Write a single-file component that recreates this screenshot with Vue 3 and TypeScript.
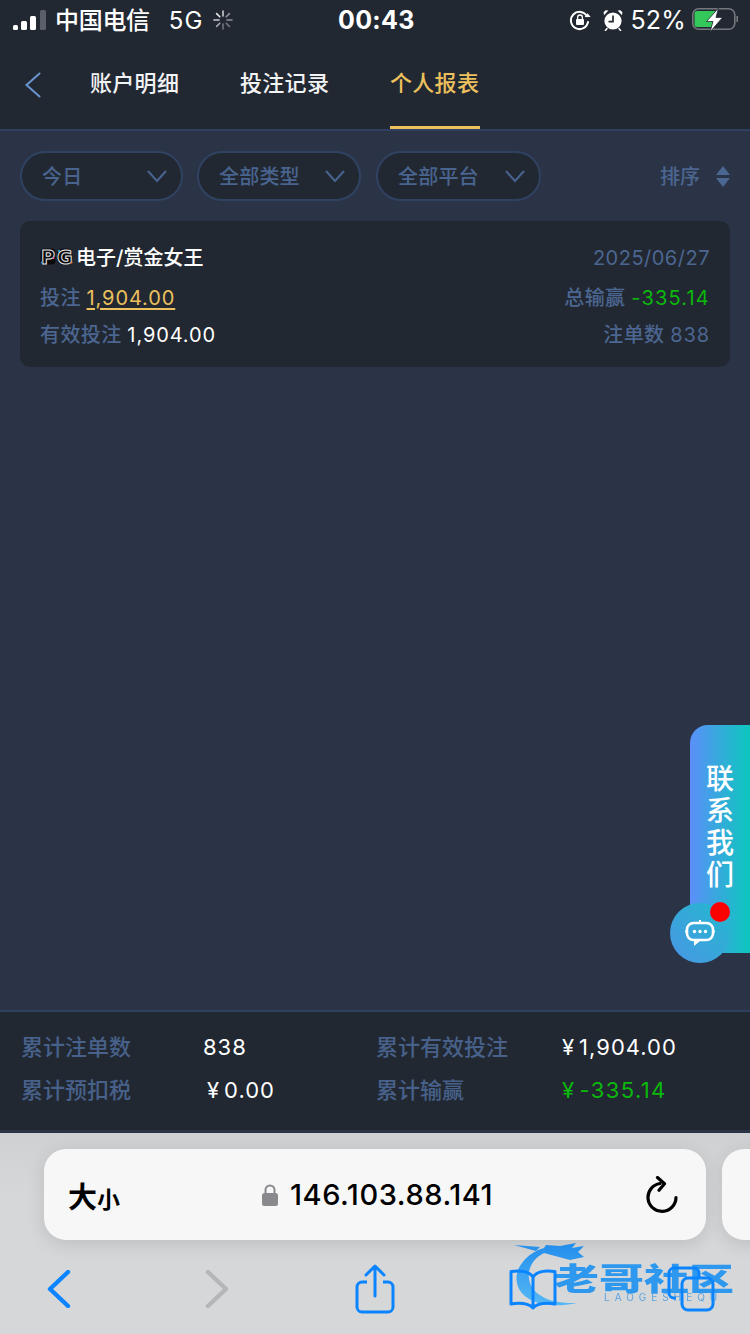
<template>
  <div class="page">
    <header class="top">
      <div class="status">
        <svg class="signal" width="33" height="20" viewBox="0 0 33 20">
          <rect x="0" y="15" width="5" height="5" rx="1.5" fill="#fff" />
          <rect x="8" y="11" width="6" height="9" rx="1.5" fill="#fff" />
          <rect x="17" y="6" width="6" height="14" rx="1.5" fill="#fff" />
          <rect x="27" y="0" width="6" height="20" rx="1.5" fill="#5b6068" />
        </svg>
        <span class="carrier">中国电信</span>
        <span class="net">5G</span>
        <svg class="spinner" width="20" height="20" viewBox="0 0 20 20" stroke-width="1.6" stroke-linecap="round">
          <path d="M10 1v5" stroke="#c9ccd0" />
          <path d="M16.4 3.6l-3.2 3.2" stroke="#8d9197" />
          <path d="M19 10h-5" stroke="#8d9197" />
          <path d="M16.4 16.4l-3.2-3.2" stroke="#70747b" />
          <path d="M10 19v-5" stroke="#70747b" />
          <path d="M3.6 16.4l3.2-3.2" stroke="#a5a8ad" />
          <path d="M1 10h5" stroke="#c9ccd0" />
          <path d="M3.6 3.6l3.2 3.2" stroke="#e6e7e9" />
        </svg>
        <span class="time">00:43</span>
        <div class="status-right">
          <svg width="22" height="22" viewBox="0 0 22 22">
            <path d="M18 7.2A8.6 8.6 0 1 0 19 13" fill="none" stroke="#fff" stroke-width="2" stroke-linecap="round" />
            <path d="M15.6 8h6l-3-3.8z" fill="#fff" />
            <rect x="7" y="10" width="8" height="6" rx="1" fill="#fff" />
            <path d="M8.6 10V8.4a2.4 2.4 0 0 1 4.8 0V10" fill="none" stroke="#fff" stroke-width="1.3" />
          </svg>
          <svg class="alarm" width="20" height="22" viewBox="0 0 20 22">
            <circle cx="10" cy="12" r="8.6" fill="#fff" />
            <path d="M10 6.5V12.6H5.5" fill="none" stroke="#222832" stroke-width="1.7" />
            <path d="M1 6.2 5.4 1.6 2.6 1.2 0.6 3.2zM19 6.2 14.6 1.6 17.4 1.2 19.4 3.2z" fill="#fff" />
            <path d="M4 19.5 2.4 21.6M16 19.5l1.6 2.1" stroke="#fff" stroke-width="1.5" stroke-linecap="round" />
          </svg>
          <span class="battery-text">52%</span>
          <svg class="battery" width="46" height="24" viewBox="0 0 46 24">
            <rect x="0.8" y="0.8" width="42" height="20.400" rx="6" fill="none" stroke="#74777c" stroke-width="1.6" />
            <path d="M45.200 8v6" stroke="#74777c" stroke-width="1.6" />
            <path d="M5 3H24L16 13h5l-1.600 6H5a2.500 2.500 0 0 1-2.500-2.500v-11A2.500 2.500 0 0 1 5 3z" fill="#34c759" />
            <path d="M26.500 0 14.600 13.500H21L18 24l12.600-14.600H24z" fill="#fff" stroke="#222832" stroke-width=".8" />
          </svg>
        </div>
      </div>
      <nav class="tabs">
        <svg class="back" width="18" height="26" viewBox="0 0 18 26">
          <path d="M15.5 1.5 2.5 13l13 11.500" fill="none" stroke="#6a94cd" stroke-width="2" stroke-linecap="round" />
        </svg>
        <a v-for="tab in tabs" :key="tab.name" class="tab" :class="{ active: tab.active }">{{ tab.name }}</a>
      </nav>
    </header>

    <section class="filters">
      <div v-for="f in filters" :key="f" class="pill">
        <span>{{ f }}</span>
        <svg width="20" height="13" viewBox="0 0 20 13">
          <path d="M1 1l9 10 9-10" fill="none" stroke="#48648f" stroke-width="2" />
        </svg>
      </div>
      <div class="sort">
        <span>排序</span>
        <svg width="14" height="21" viewBox="0 0 14 21">
          <path d="M7 0l7 9H0zM0 12h14l-7 9z" fill="#4b6690" />
        </svg>
      </div>
    </section>

    <article class="card">
      <div class="row title-row">
        <div class="game">
          <svg class="pg" width="33" height="19" viewBox="0 0 33 19">
            <rect x="0.500" y="1.500" width="15" height="16" rx="4" fill="#0a0a0c" />
            <rect x="17" y="1.500" width="15.500" height="16" rx="6" fill="#0a0a0c" />
            <text x="1" y="16.500" class="pg-letter">P</text>
            <text x="17" y="16.500" class="pg-letter">G</text>
            <circle cx="2" cy="15.500" r="1" fill="#31a8f5" />
            <circle cx="13.500" cy="11" r="1" fill="#ec4aa0" />
            <circle cx="19" cy="4" r="1" fill="#31c7f5" />
            <circle cx="31.500" cy="15.500" r="1" fill="#f5762f" />
          </svg>
          <span>电子/赏金女王</span>
        </div>
        <span class="date">2025/06/27</span>
      </div>
      <div class="row stake-row">
        <span class="label">投注 <a class="link">1,904.00</a></span>
        <span class="label">总输赢 <em class="loss">-335.14</em></span>
      </div>
      <div class="row">
        <span class="label">有效投注 <b class="val">1,904.00</b></span>
        <span class="label">注单数 <i class="plain">838</i></span>
      </div>
    </article>

    <div class="contact">
      <div class="contact-tab">
        <span>联</span><span>系</span><span>我</span><span>们</span>
      </div>
      <div class="bubble">
        <svg width="32" height="28" viewBox="0 0 32 28">
          <rect x="3" y="4" width="26" height="17" rx="6.500" fill="none" stroke="#fff" stroke-width="2.600" />
          <path d="M1 12.500h3M28 12.500h3M16 1v3" stroke="#fff" stroke-width="2" />
          <path d="M10 21v6l6-5z" fill="#fff" />
          <circle cx="10.500" cy="12.500" r="1.700" fill="#fff" />
          <circle cx="16" cy="12.500" r="1.700" fill="#fff" />
          <circle cx="21.500" cy="12.500" r="1.700" fill="#fff" />
        </svg>
      </div>
      <i class="dot"></i>
    </div>

    <section class="totals">
      <template v-for="t in totals" :key="t.label">
        <span class="t-label">{{ t.label }}</span>
        <span class="t-value" :class="{ green: t.green, indent: t.indent }"><i v-if="t.money" class="cur">¥</i>{{ t.value }}</span>
      </template>
    </section>

    <footer class="browser">
      <div class="url-row">
        <div class="url-bar">
          <span class="aa">大<small>小</small></span>
          <div class="address">
            <svg width="16" height="22" viewBox="0 0 16 22">
              <path d="M3.500 10V6a4.500 4.500 0 0 1 9 0v4" fill="none" stroke="#8a8a8e" stroke-width="2" />
              <rect x="0" y="9" width="16" height="13" rx="2.500" fill="#8a8a8e" />
            </svg>
            <span>146.103.88.141</span>
          </div>
          <svg class="reload" width="32" height="37" viewBox="0 0 32 37">
            <path d="M14 7.500a14 14 0 1 0 16 14" fill="none" stroke="#000" stroke-width="3.200" stroke-linecap="round" />
            <path d="M11.500 1.500l7 6.300-5.500 6.500" fill="none" stroke="#000" stroke-width="3.200" stroke-linecap="round" stroke-linejoin="round" />
          </svg>
        </div>
        <div class="url-bar next"></div>
      </div>
      <div class="watermark">
        <svg class="dragon" width="90" height="72" viewBox="0 0 90 72">
          <defs>
            <linearGradient id="wm" x1="0" y1="0" x2="0" y2="1">
              <stop offset="0" stop-color="#0f86f0" />
              <stop offset="1" stop-color="#4ab6f8" />
            </linearGradient>
          </defs>
          <path d="M26 11C8 20 0 36 7 50c8 14 30 20 58 14-24 1-42-6-47-20-4-12 2-24 14-30l26 7 14-3-6-5 6-6-12 2 4-5-16 3-14-1-2 3z" fill="url(#wm)" />
          <path d="M2 6l26 2-4 4z" fill="#1a8cf0" />
        </svg>
        <div class="wm-name">老哥社区</div>
        <div class="wm-sub">LAOGESHEQU</div>
      </div>
      <div class="tools">
        <div class="tool">
          <svg width="24" height="38" viewBox="0 0 24 38">
            <path d="M21 2 3 19l18 17" fill="none" stroke="#0a84ff" stroke-width="4.400" stroke-linecap="round" stroke-linejoin="round" />
          </svg>
        </div>
        <div class="tool">
          <svg width="24" height="38" viewBox="0 0 24 38">
            <path d="M3 2l18 17L3 36" fill="none" stroke="#b5b6b8" stroke-width="4.400" stroke-linecap="round" stroke-linejoin="round" />
          </svg>
        </div>
        <div class="tool">
          <svg width="40" height="50" viewBox="0 0 40 50" fill="none" stroke="#0a84ff" stroke-width="3">
            <path d="M12 18H7a5 5 0 0 0-5 5v20a5 5 0 0 0 5 5h26a5 5 0 0 0 5-5V23a5 5 0 0 0-5-5h-5" />
            <path d="M20 32V3M11 11l9-9 9 9" stroke-linecap="round" stroke-linejoin="round" />
          </svg>
        </div>
        <div class="tool">
          <svg width="50" height="42" viewBox="0 0 50 42" fill="none" stroke="#0a84ff" stroke-width="3" stroke-linejoin="round">
            <path d="M25 9C21 3 14 2 3 3.500V36c10-1.500 17-1 22 4 5-5 12-5.500 22-4V3.500C36 2 29 3 25 9zM25 9v30" />
          </svg>
        </div>
        <div class="tool">
          <svg width="48" height="46" viewBox="0 0 48 46" fill="none" stroke="#0a84ff" stroke-width="3">
            <path d="M9 32H7a5 5 0 0 1-5-5V7a5 5 0 0 1 5-5h20a5 5 0 0 1 5 5v4" />
            <rect x="15" y="12" width="31" height="32" rx="6" />
          </svg>
        </div>
      </div>
    </footer>
  </div>
</template>

<script setup lang="ts">
interface Total {
  label: string
  value: string
  money?: boolean
  green?: boolean
  indent?: boolean
}

const tabs = [
  { name: '账户明细' },
  { name: '投注记录' },
  { name: '个人报表', active: true },
]

const filters = ['今日', '全部类型', '全部平台']

const totals: Total[] = [
  { label: '累计注单数', value: '838' },
  { label: '累计有效投注', value: '1,904.00', money: true },
  { label: '累计预扣税', value: '0.00', money: true, indent: true },
  { label: '累计输赢', value: '-335.14', money: true, green: true },
]
</script>

<style>
html,
body {
  margin: 0;
  background: #2b3447;
}
</style>

<style scoped>
.page {
  position: relative;
  width: 750px;
  height: 1334px;
  overflow: hidden;
  display: flex;
  flex-direction: column;
  background: #2b3447;
  color: #fff;
  font-family: Inter, "Noto Sans CJK SC", sans-serif;
}
.top {
  height: 129px;
  background: #222832;
  border-bottom: 2px solid #2f4061;
}
.status {
  height: 40px;
  display: flex;
  align-items: center;
  position: relative;
  padding: 0 12px 0 13px;
}
.signal {
  margin-right: 9px;
}
.carrier {
  font-size: 24px;
  letter-spacing: -0.3px;
  margin-top: -4px;
  font-weight: 500;
}
.net {
  font-size: 24px;
  margin-left: 19px;
  letter-spacing: 1px;
}
.spinner {
  margin-left: 10px;
}
.time {
  position: absolute;
  left: 338px;
  top: 5px;
  font-size: 25px;
  font-weight: 700;
  letter-spacing: 0.3px;
}
.status-right {
  margin-left: auto;
  display: flex;
  align-items: center;
}
.alarm {
  margin-left: 12px;
}
.battery-text {
  font-size: 25px;
  margin-left: 7px;
  letter-spacing: 0.2px;
}
.battery {
  margin-left: 6px;
}
.tabs {
  height: 89px;
  display: flex;
  align-items: stretch;
  padding-left: 24px;
}
.back {
  align-self: center;
  margin-right: 48px;
}
.tab {
  font-size: 22px;
  font-weight: 500;
  line-height: 87px;
  height: 89px;
  width: 90px;
  margin-right: 60px;
  letter-spacing: 0.3px;
  white-space: nowrap;
  color: #f2f3f5;
  box-sizing: border-box;
}
.tab.active {
  color: #ecc05c;
  border-bottom: 3px solid #ecc05c;
}
.filters {
  display: flex;
  align-items: center;
  padding: 20px 20px 0;
  gap: 14px;
}
.pill {
  box-sizing: border-box;
  flex: 0 0 164px;
  height: 50px;
  padding: 0 14px 2px 20px;
  display: flex;
  align-items: center;
  justify-content: space-between;
  border: 2px solid #304262;
  border-radius: 25px;
  background: #222832;
  font-size: 20px;
  font-weight: 500;
  letter-spacing: 0.2px;
  color: #48648f;
}
.pill:nth-child(1) {
  flex-basis: 163px;
}
.pill:nth-child(3) {
  flex-basis: 165px;
  margin-left: 1px;
}
.pill svg {
  margin-top: 2px;
}
.sort {
  margin-left: auto;
  display: flex;
  align-items: center;
  gap: 16px;
  font-size: 20px;
  font-weight: 500;
  color: #4b6690;
}
.sort span {
  margin-top: -2px;
}
.card {
  margin: 20px 20px 0;
  height: 146px;
  box-sizing: border-box;
  padding: 20px 20px 0;
  border-radius: 10px;
  background: #222832;
}
.row {
  display: flex;
  justify-content: space-between;
  align-items: center;
  height: 36px;
  font-size: 20px;
}
.title-row {
  height: 32px;
}
.stake-row {
  box-sizing: border-box;
  margin-top: 3px;
  height: 39px;
  padding-top: 2px;
}
.game {
  display: flex;
  align-items: center;
  gap: 3px;
  font-weight: 500;
  margin-top: -2px;
}
.pg {
  overflow: visible;
}
.pg-letter {
  font-family: "DejaVu Sans", sans-serif;
  font-size: 19px;
  font-weight: 700;
  fill: #0a0a0c;
  stroke: #e8e8e8;
  stroke-width: 1;
}
.date {
  color: #4b6690;
  letter-spacing: 0.5px;
  margin-top: 1px;
}
.label {
  color: #4b6690;
  letter-spacing: 0.4px;
  font-weight: 500;
}
.link {
  color: #ecc05c;
  text-decoration: underline;
  text-underline-offset: 3px;
  letter-spacing: 0.9px;
  font-weight: 400;
}
.loss {
  color: #0bb80b;
  font-style: normal;
  letter-spacing: 1.2px;
  font-weight: 400;
}
.val {
  color: #fff;
  font-weight: 400;
  letter-spacing: 0.9px;
}
.plain {
  font-style: normal;
  letter-spacing: 0.9px;
  font-weight: 400;
}
.contact {
  position: absolute;
  left: 670px;
  top: 725px;
  width: 80px;
  height: 238px;
}
.contact-tab {
  position: absolute;
  left: 20px;
  top: 0;
  width: 60px;
  height: 228px;
  box-sizing: border-box;
  padding: 38px 0 0 16px;
  border-radius: 18px 0 0 30px;
  background: linear-gradient(90deg, #5b8ff9, #0cc7bd);
  display: flex;
  flex-direction: column;
  font-size: 28px;
  font-weight: 500;
  line-height: 32px;
}
.bubble {
  position: absolute;
  left: 0;
  top: 178px;
  width: 60px;
  height: 60px;
  border-radius: 50%;
  background: linear-gradient(45deg, #4a96e6, #22b9cc);
  display: flex;
  align-items: center;
  justify-content: center;
}
.dot {
  position: absolute;
  left: 40px;
  top: 177px;
  width: 20px;
  height: 20px;
  border-radius: 50%;
  background: #f00;
}
.totals {
  position: absolute;
  left: 0;
  right: 0;
  top: 1010px;
  height: 120px;
  box-sizing: border-box;
  border-top: 2px solid #2f4061;
  padding: 13px 0 0 21px;
  background: #222832;
  display: grid;
  grid-template-columns: 182px 173px 186px 1fr;
  grid-auto-rows: 43px;
  align-items: center;
  font-size: 22px;
}
.t-label {
  color: #47618a;
  font-weight: 500;
  margin-bottom: 4px;
}
.t-value {
  color: #fff;
  letter-spacing: 1px;
}
.t-value.indent {
  padding-left: 4px;
}
.t-value.green {
  color: #0bb80b;
  letter-spacing: 1.4px;
}
.cur {
  font-style: normal;
  margin-right: 4px;
}
.browser {
  position: absolute;
  left: 0;
  right: 0;
  top: 1130px;
  height: 204px;
  box-sizing: border-box;
  border-top: 3px solid #2b3447;
  background: linear-gradient(180deg, #cfd0d2, #d6d7d9 30%);
  color: #000;
}
.url-row {
  display: flex;
  gap: 16px;
  padding: 16px 0 0 44px;
}
.url-bar {
  flex: 0 0 662px;
  height: 91px;
  box-sizing: border-box;
  padding: 0 28px 0 24px;
  display: flex;
  align-items: center;
  border-radius: 22px;
  background: #f7f7f7;
  box-shadow: 0 4px 18px rgba(0, 0, 0, 0.12);
}
.url-bar.next {
  flex-basis: 120px;
}
.aa {
  font-size: 29px;
  font-weight: 700;
  font-family: "Noto Sans CJK SC", sans-serif;
}
.aa small {
  font-size: 23px;
}
.address {
  position: absolute;
  left: 262px;
  display: flex;
  align-items: center;
  gap: 12px;
  font-size: 29px;
  letter-spacing: 0.55px;
  font-weight: 500;
}
.reload {
  margin-left: auto;
}
.tools {
  position: relative;
  display: flex;
  justify-content: center;
  height: 56px;
  margin-top: 21px;
  align-items: center;
}
.tool {
  flex: 0 0 158px;
  display: flex;
  justify-content: center;
}
.watermark {
  position: absolute;
  left: 512px;
  top: 106px;
  width: 225px;
  height: 70px;
  opacity: 0.9;
}
.dragon {
  position: absolute;
  left: 0;
  top: 0;
  filter: blur(0.7px);
}
.wm-name {
  position: absolute;
  left: 42px;
  top: 23px;
  font-family: "Noto Sans CJK SC", sans-serif;
  font-size: 45px;
  line-height: 30px;
  font-weight: 900;
  white-space: nowrap;
  color: #1c92f2;
  transform: scaleY(0.68);
  filter: blur(0.7px);
}
.wm-sub {
  position: absolute;
  left: 92px;
  top: 53px;
  font-size: 10px;
  line-height: 10px;
  letter-spacing: 5px;
  color: #4f9fe0;
  white-space: nowrap;
}
</style>
